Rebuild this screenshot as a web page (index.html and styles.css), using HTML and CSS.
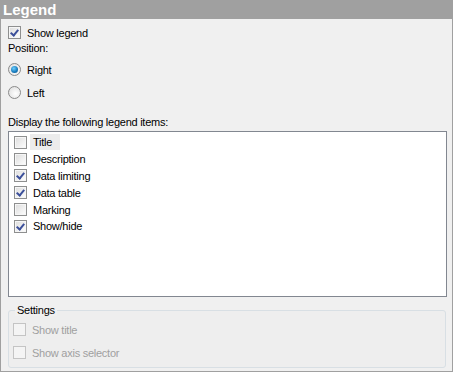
FILE: index.html
```html
<!DOCTYPE html>
<html>
<head>
<meta charset="utf-8">
<link rel="stylesheet" href="styles.css">
</head>
<body>
<div class="panel">
  <div class="header">Legend</div>
  <div class="content">
    <label class="row first"><span class="cb checked"></span>Show legend</label>
    <div class="label">Position:</div>
    <label class="row radio-row"><span class="radio on"></span>Right</label>
    <label class="row radio-row"><span class="radio"></span>Left</label>
    <div class="label list-label">Display the following legend items:</div>
    <div class="listbox">
      <div class="item"><span class="cb"></span><span class="txt focus">Title</span></div>
      <div class="item"><span class="cb"></span><span class="txt">Description</span></div>
      <div class="item"><span class="cb checked"></span><span class="txt">Data limiting</span></div>
      <div class="item"><span class="cb checked"></span><span class="txt">Data table</span></div>
      <div class="item"><span class="cb"></span><span class="txt">Marking</span></div>
      <div class="item"><span class="cb checked"></span><span class="txt">Show/hide</span></div>
    </div>
    <div class="group">
      <div class="group-title">Settings</div>
      <div class="row dis"><span class="cb disabled"></span>Show title</div>
      <div class="row dis"><span class="cb disabled"></span>Show axis selector</div>
    </div>
  </div>
</div>
</body>
</html>
```

FILE: styles.css
```css
html, body {
  margin: 0;
  padding: 0;
  background: #ffffff;
}
body {
  font-family: "Liberation Sans", Arial, sans-serif;
  font-size: 11px;
  letter-spacing: -0.25px;
  color: #000;
}
.panel {
  width: 451px;
  height: 371px;
  border-left: 1px solid #a0a0a0;
  border-right: 1px solid #a0a0a0;
  border-bottom: 1px solid #a0a0a0;
  background: #f0f0f0;
  box-sizing: content-box;
}
.header {
  height: 19px;
  background: #a0a0a0;
  color: #ffffff;
  font-weight: bold;
  font-size: 15px;
  letter-spacing: 0;
  line-height: 20px;
  padding-left: 3px;
  margin-left: -1px;
  margin-right: -1px;
}
.content {
  padding: 0 0 0 7px;
}
.row {
  display: flex;
  align-items: center;
  height: 13px;
  gap: 6px;
}
.first {
  margin-top: 7px;
}
.label {
  margin-top: 2px;
  height: 14px;
  line-height: 14px;
}
.radio-row {
  margin-top: 8px;
}
.radio-row + .radio-row {
  margin-top: 10px;
}
.list-label {
  margin-top: 16px;
}
.cb {
  display: inline-block;
  width: 11px;
  height: 11px;
  border: 1px solid #8e8f8f;
  background: linear-gradient(135deg, #dcdcdc 0%, #f4f4f4 70%, #ffffff 100%);
  box-shadow: inset 0 0 0 1px #f6f6f6;
  position: relative;
  flex: none;
}
.cb.checked::after {
  content: "";
  position: absolute;
  left: 3px;
  top: 1px;
  width: 3px;
  height: 6px;
  border-right: 2px solid #3b4f9a;
  border-bottom: 2px solid #3b4f9a;
  transform: rotate(40deg);
}
.cb.disabled {
  border-color: #c4c4c4;
  background: #f4f4f4;
  box-shadow: none;
}
.radio {
  display: inline-block;
  width: 11px;
  height: 11px;
  border-radius: 50%;
  border: 1px solid #8a8a8a;
  background: radial-gradient(circle at 60% 60%, #ffffff 0%, #e2e2e2 80%);
  position: relative;
  flex: none;
}
.radio.on::after {
  content: "";
  position: absolute;
  left: 2px;
  top: 2px;
  width: 7px;
  height: 7px;
  border-radius: 50%;
  background: radial-gradient(circle at 40% 35%, #6fd0ff 0%, #1b7fc0 55%, #0b4e86 100%);
}
.listbox {
  margin-top: 2px;
  border: 1px solid #828790;
  background: #ffffff;
  padding-top: 2px;
  box-sizing: border-box;
  height: 166px;
  width: 439px;
}
.item {
  display: flex;
  align-items: center;
  height: 16.8px;
  padding-left: 5px;
}
.item .txt {
  margin-left: 3px;
  padding: 0 3px;
  line-height: 16px;
}
.item .txt.focus {
  background: #ececec;
  padding-right: 8px;
}
.group {
  margin-top: 13px;
  width: 438px;
  height: 58px;
  box-sizing: border-box;
  border: 1px solid #d8dfe4;
  border-radius: 3px;
  padding: 0 0 0 4px;
  background: #eeeeee;
  position: relative;
}
.group-title {
  position: absolute;
  top: -7px;
  left: 6px;
  padding: 0 2px;
  line-height: 12px;
  background: #f0f0f0;
  color: #000;
}
.group .row {
  margin-top: 12px;
}
.group .row + .row {
  margin-top: 10px;
}
.dis {
  color: #a0a0a0;
}
```
